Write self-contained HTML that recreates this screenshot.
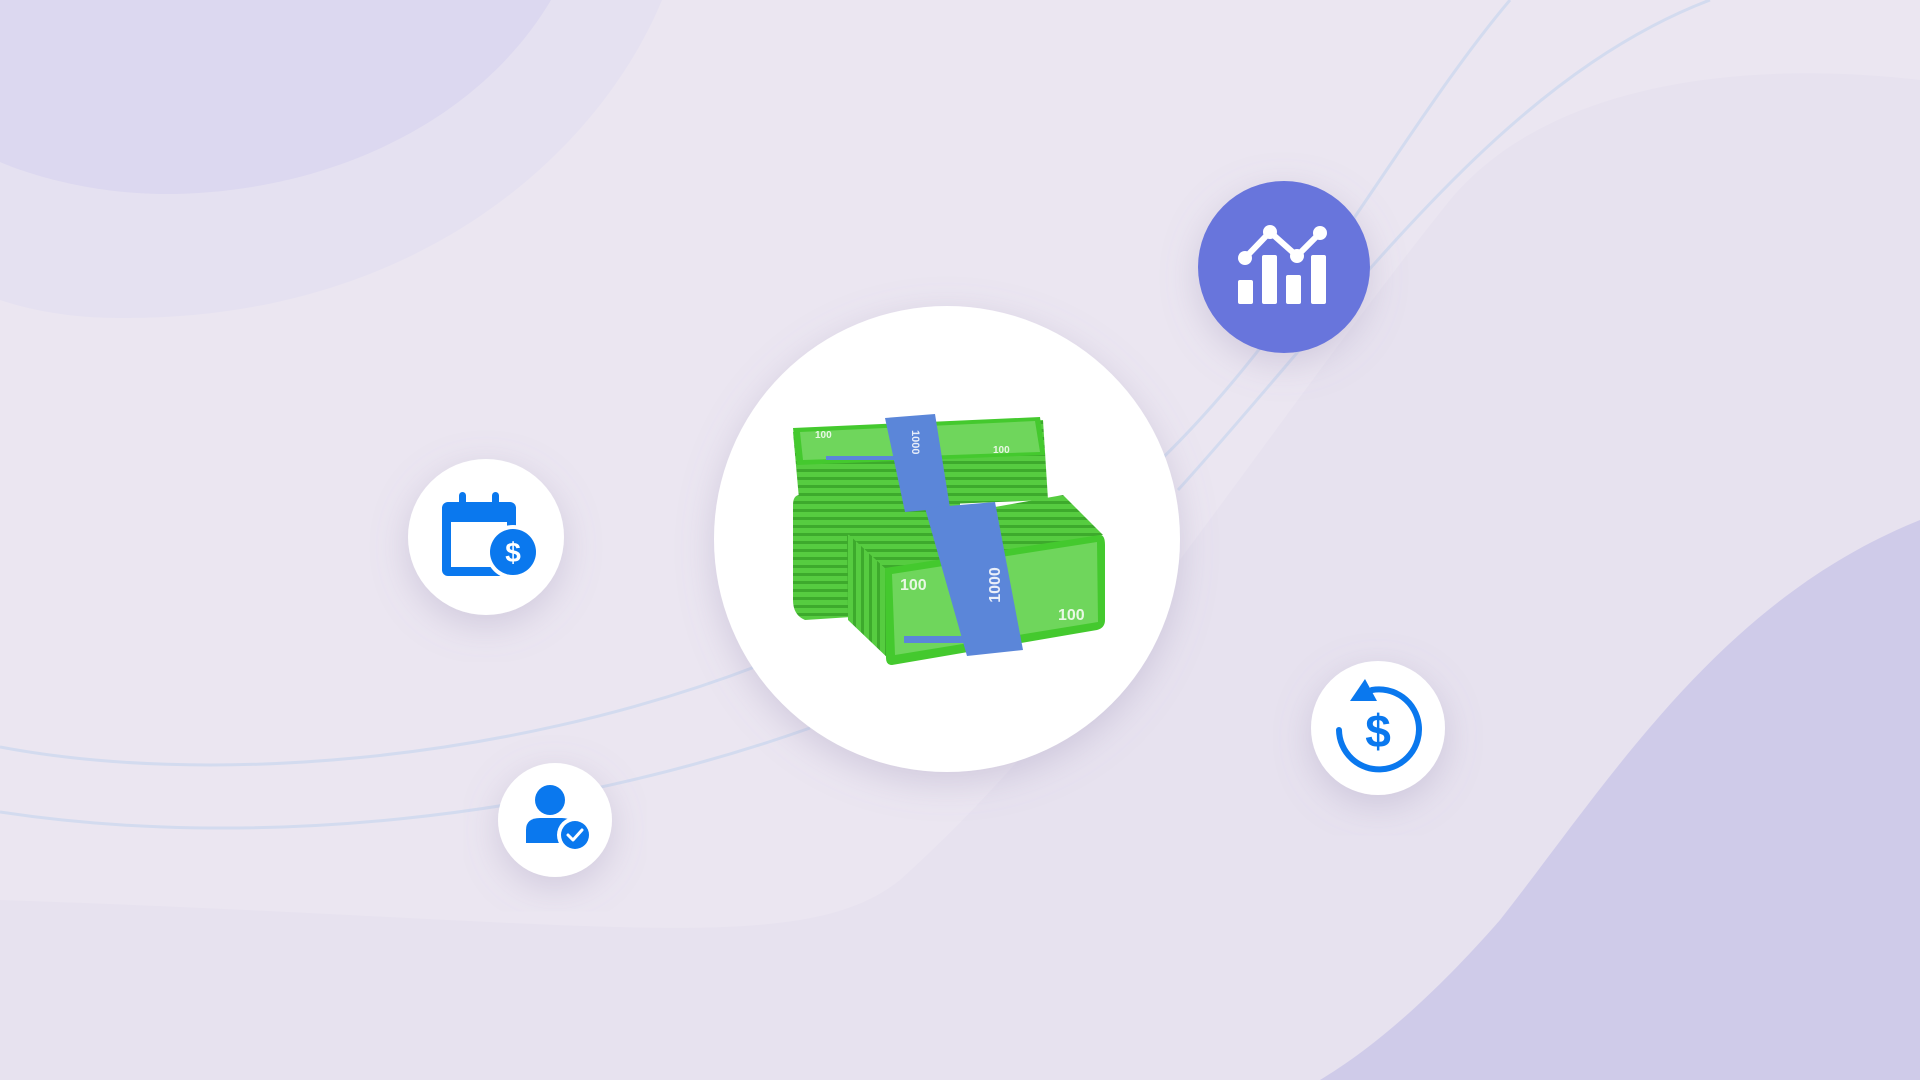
<!DOCTYPE html>
<html><head><meta charset="utf-8"><style>
html,body{margin:0;padding:0;width:1920px;height:1080px;overflow:hidden;background:#ebe6f1;font-family:"Liberation Sans",sans-serif}
svg{position:absolute;left:0;top:0}
</style></head><body>
<svg width="1920" height="1080" viewBox="0 0 1920 1080">
<defs>
<filter id="sh" x="-30%" y="-30%" width="160%" height="160%"><feDropShadow dx="0" dy="10" stdDeviation="18" flood-color="#8a7fa8" flood-opacity="0.28"/></filter>
<pattern id="stripes" width="8" height="8" patternUnits="userSpaceOnUse"><rect width="8" height="8" fill="#56cc40"/><rect y="5" width="8" height="3" fill="#3daa2c"/></pattern>
<pattern id="vstripes" width="8" height="8" patternUnits="userSpaceOnUse"><rect width="8" height="8" fill="#56cc40"/><rect x="5" width="3" height="8" fill="#3daa2c"/></pattern>
</defs>
<path d="M0,0 L662,0 C600,150 420,320 120,318 C70,318 30,310 0,300 Z" fill="#e5e1f1"/>
<path d="M0,0 L551,0 C480,120 330,195 160,194 C90,193 30,175 0,162 Z" fill="#dcd8f0"/>
<path d="M1920,80 C1750,60 1550,80 1450,200 C1250,450 1100,700 900,880 C800,960 600,920 0,900 L0,1080 L1920,1080 Z" fill="#e7e2ef"/>
<path d="M1920,520 C1720,600 1610,780 1500,920 C1430,1000 1370,1050 1320,1080 L1920,1080 Z" fill="#cfcbe9"/>
<g fill="none" stroke="#d3dbef" stroke-width="3">
<path d="M0,747 C200,785 500,765 760,665"/>
<path d="M1150,470 C1300,330 1400,130 1510,0"/>
<path d="M0,812 C250,850 550,820 810,728"/>
<path d="M1178,490 C1350,300 1500,80 1710,0"/>
</g>
<circle cx="947" cy="539" r="233" fill="#fff" filter="url(#sh)"/>
<path d="M793,432 L1043,420 L1048,500 L800,510 Z" fill="url(#stripes)"/>
<path d="M793,428 L1040,417 L1045,455 L797,465 Z" fill="#44c92e"/>
<path d="M800,432 L1035,421 L1040,452 L803,460 Z" fill="#6fd65c"/>
<text x="815" y="438" font-size="10" font-weight="bold" fill="#e8f8e4">100</text>
<text x="993" y="453" font-size="10" font-weight="bold" fill="#e8f8e4">100</text>
<rect x="826" y="456" width="70" height="4" fill="#5b86d9"/>
<path d="M800,495 L960,490 L960,610 L805,620 Q793,615 793,600 L793,505 Q793,495 800,495 Z" fill="url(#stripes)"/>
<path d="M847,535 L890,530 L892,662 L848,620 Z" fill="url(#vstripes)"/>
<path d="M847,533 L1063,495 L1103,535 L887,570 Z" fill="url(#stripes)"/>
<path d="M885,568 L1100,535 Q1105,535 1105,545 L1105,620 Q1105,628 1097,630 L892,665 Q886,665 886,658 Z" fill="#44c92e"/>
<path d="M892,574 L1097,542 L1098,622 L895,655 Z" fill="#6fd65c"/>
<text x="900" y="590" font-size="16" font-weight="bold" fill="#e8f8e4">100</text>
<text x="1058" y="620" font-size="16" font-weight="bold" fill="#e8f8e4">100</text>
<rect x="904" y="636" width="64" height="7" fill="#5b86d9"/>
<ellipse cx="975" cy="600" rx="8" ry="18" fill="#e8f3e8"/>
<path d="M885,418 L935,414 L950,508 L905,512 Z" fill="#5b86d9"/>
<text transform="translate(912,430) rotate(90)" font-size="11" font-weight="bold" fill="#e8eef9">1000</text>
<path d="M925,508 L995,502 L1023,650 L967,656 Z" fill="#5b86d9"/>
<text transform="translate(1000,585) rotate(-90)" font-size="16" font-weight="bold" fill="#e8eef9" text-anchor="middle">1000</text>
<circle cx="486" cy="537" r="78" fill="#fff" filter="url(#sh)"/>
<g fill="#0a78ee">
<rect x="442" y="502" width="74" height="74" rx="6"/>
<rect x="459" y="492" width="7" height="16" rx="3.5"/>
<rect x="492" y="492" width="7" height="16" rx="3.5"/>
</g>
<rect x="451" y="522" width="56" height="45" fill="#fff"/>
<circle cx="513" cy="552" r="27" fill="#fff"/>
<circle cx="513" cy="552" r="23" fill="#0a78ee"/>
<text x="513" y="562" font-size="28" font-weight="bold" fill="#fff" text-anchor="middle">$</text>
<circle cx="555" cy="820" r="57" fill="#fff" filter="url(#sh)"/>
<circle cx="550" cy="800" r="15" fill="#0a78ee"/>
<path d="M526,843 L526,830 Q526,818 540,818 L562,818 Q574,818 574,830 L574,843 Z" fill="#0a78ee"/>
<circle cx="575" cy="835" r="18" fill="#fff"/>
<circle cx="575" cy="835" r="14" fill="#0a78ee"/>
<path d="M568,835 L573,840 L582,830" fill="none" stroke="#fff" stroke-width="3" stroke-linecap="round" stroke-linejoin="round"/>
<circle cx="1284" cy="267" r="86" fill="#6874dc" filter="url(#sh)"/>
<g fill="#fff">
<rect x="1238" y="280" width="15" height="24" rx="2"/>
<rect x="1262" y="255" width="15" height="49" rx="2"/>
<rect x="1286" y="275" width="15" height="29" rx="2"/>
<rect x="1311" y="255" width="15" height="49" rx="2"/>
<circle cx="1245" cy="258" r="7"/><circle cx="1270" cy="232" r="7"/><circle cx="1297" cy="256" r="7"/><circle cx="1320" cy="233" r="7"/>
</g>
<path d="M1245,258 L1270,232 L1297,256 L1320,233" fill="none" stroke="#fff" stroke-width="6" stroke-linejoin="round"/>
<circle cx="1378" cy="728" r="67" fill="#fff" filter="url(#sh)"/>
<path d="M1339,730 A40,40 0 1 0 1372,690" fill="none" stroke="#0a78ee" stroke-width="6" stroke-linecap="round"/>
<path d="M1365,679 L1377,701 L1350,701 Z" fill="#0a78ee"/>
<text x="1378" y="747" font-size="46" font-weight="bold" fill="#0a78ee" text-anchor="middle">$</text>
</svg>
</body></html>
